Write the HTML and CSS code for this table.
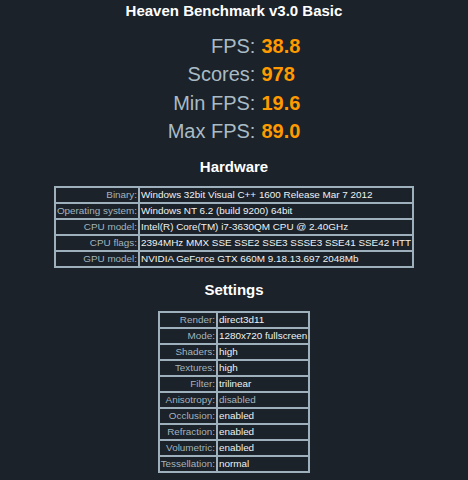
FILE: index.html
```html
<!DOCTYPE html>
<html>
<head>
<meta charset="utf-8">
<link rel="stylesheet" href="styles.css">
</head>
<body>
<h1 class="title">Heaven Benchmark v3.0 Basic</h1>
<div class="stats">
  <div class="stat-label">FPS:</div><div class="stat-value">38.8</div>
  <div class="stat-label">Scores:</div><div class="stat-value">978</div>
  <div class="stat-label">Min FPS:</div><div class="stat-value">19.6</div>
  <div class="stat-label">Max FPS:</div><div class="stat-value">89.0</div>
</div>
<h2 class="heading heading-hw">Hardware</h2>
<table class="info">
  <tr><td class="k">Binary:</td><td class="v">Windows 32bit Visual C++ 1600 Release Mar 7 2012</td></tr>
  <tr><td class="k">Operating system:</td><td class="v">Windows NT 6.2 (build 9200) 64bit</td></tr>
  <tr><td class="k">CPU model:</td><td class="v">Intel(R) Core(TM) i7-3630QM CPU @ 2.40GHz</td></tr>
  <tr><td class="k">CPU flags:</td><td class="v">2394MHz MMX SSE SSE2 SSE3 SSSE3 SSE41 SSE42 HTT</td></tr>
  <tr><td class="k">GPU model:</td><td class="v">NVIDIA GeForce GTX 660M 9.18.13.697 2048Mb</td></tr>
</table>
<h2 class="heading heading-set">Settings</h2>
<table class="info">
  <tr><td class="k">Render:</td><td class="v">direct3d11</td></tr>
  <tr><td class="k">Mode:</td><td class="v">1280x720 fullscreen</td></tr>
  <tr><td class="k">Shaders:</td><td class="v">high</td></tr>
  <tr><td class="k">Textures:</td><td class="v">high</td></tr>
  <tr><td class="k">Filter:</td><td class="v">trilinear</td></tr>
  <tr><td class="k">Anisotropy:</td><td class="v dim">disabled</td></tr>
  <tr><td class="k">Occlusion:</td><td class="v">enabled</td></tr>
  <tr><td class="k">Refraction:</td><td class="v">enabled</td></tr>
  <tr><td class="k">Volumetric:</td><td class="v">enabled</td></tr>
  <tr><td class="k">Tessellation:</td><td class="v">normal</td></tr>
</table>
</body>
</html>
```
FILE: styles.css
```css
html, body {
  margin: 0;
  padding: 0;
  background: #1b2229;
  font-family: "Liberation Sans", Arial, sans-serif;
  color: #e6ecef;
}
body {
  width: 468px;
  height: 480px;
  overflow: hidden;
  padding-top: 2px;
  box-sizing: border-box;
}
.title {
  margin: 0;
  font-size: 15px;
  line-height: 18px;
  font-weight: bold;
  text-align: center;
  color: #ffffff;
}
.stats {
  display: grid;
  grid-template-columns: auto auto;
  justify-content: center;
  column-gap: 6px;
  margin-top: 12px;
  font-size: 20px;
  line-height: 28.3px;
}
.stat-label {
  text-align: right;
  color: #a9bbc5;
}
.stat-value {
  text-align: left;
  color: #ff9a00;
  font-weight: bold;
}
.heading {
  margin: 0;
  font-size: 15px;
  line-height: 18px;
  font-weight: bold;
  text-align: center;
  color: #ffffff;
}
.heading-hw {
  margin-top: 13px;
  margin-bottom: 10px;
}
.heading-set {
  margin-top: 13px;
  margin-bottom: 12px;
}
.info {
  margin: 0 auto;
  border-collapse: separate;
  border-spacing: 0;
  border: 1px solid #9db0bb;
  font-size: 9.9px;
  line-height: 12px;
}
.info td {
  border: 1px solid #9db0bb;
  padding: 1px 1px;
  white-space: nowrap;
}
.info .k {
  text-align: right;
  color: #a3b4be;
}
.info .v {
  text-align: left;
  color: #eef2f4;
}
.info .v.dim {
  color: #a3b4be;
}
```
